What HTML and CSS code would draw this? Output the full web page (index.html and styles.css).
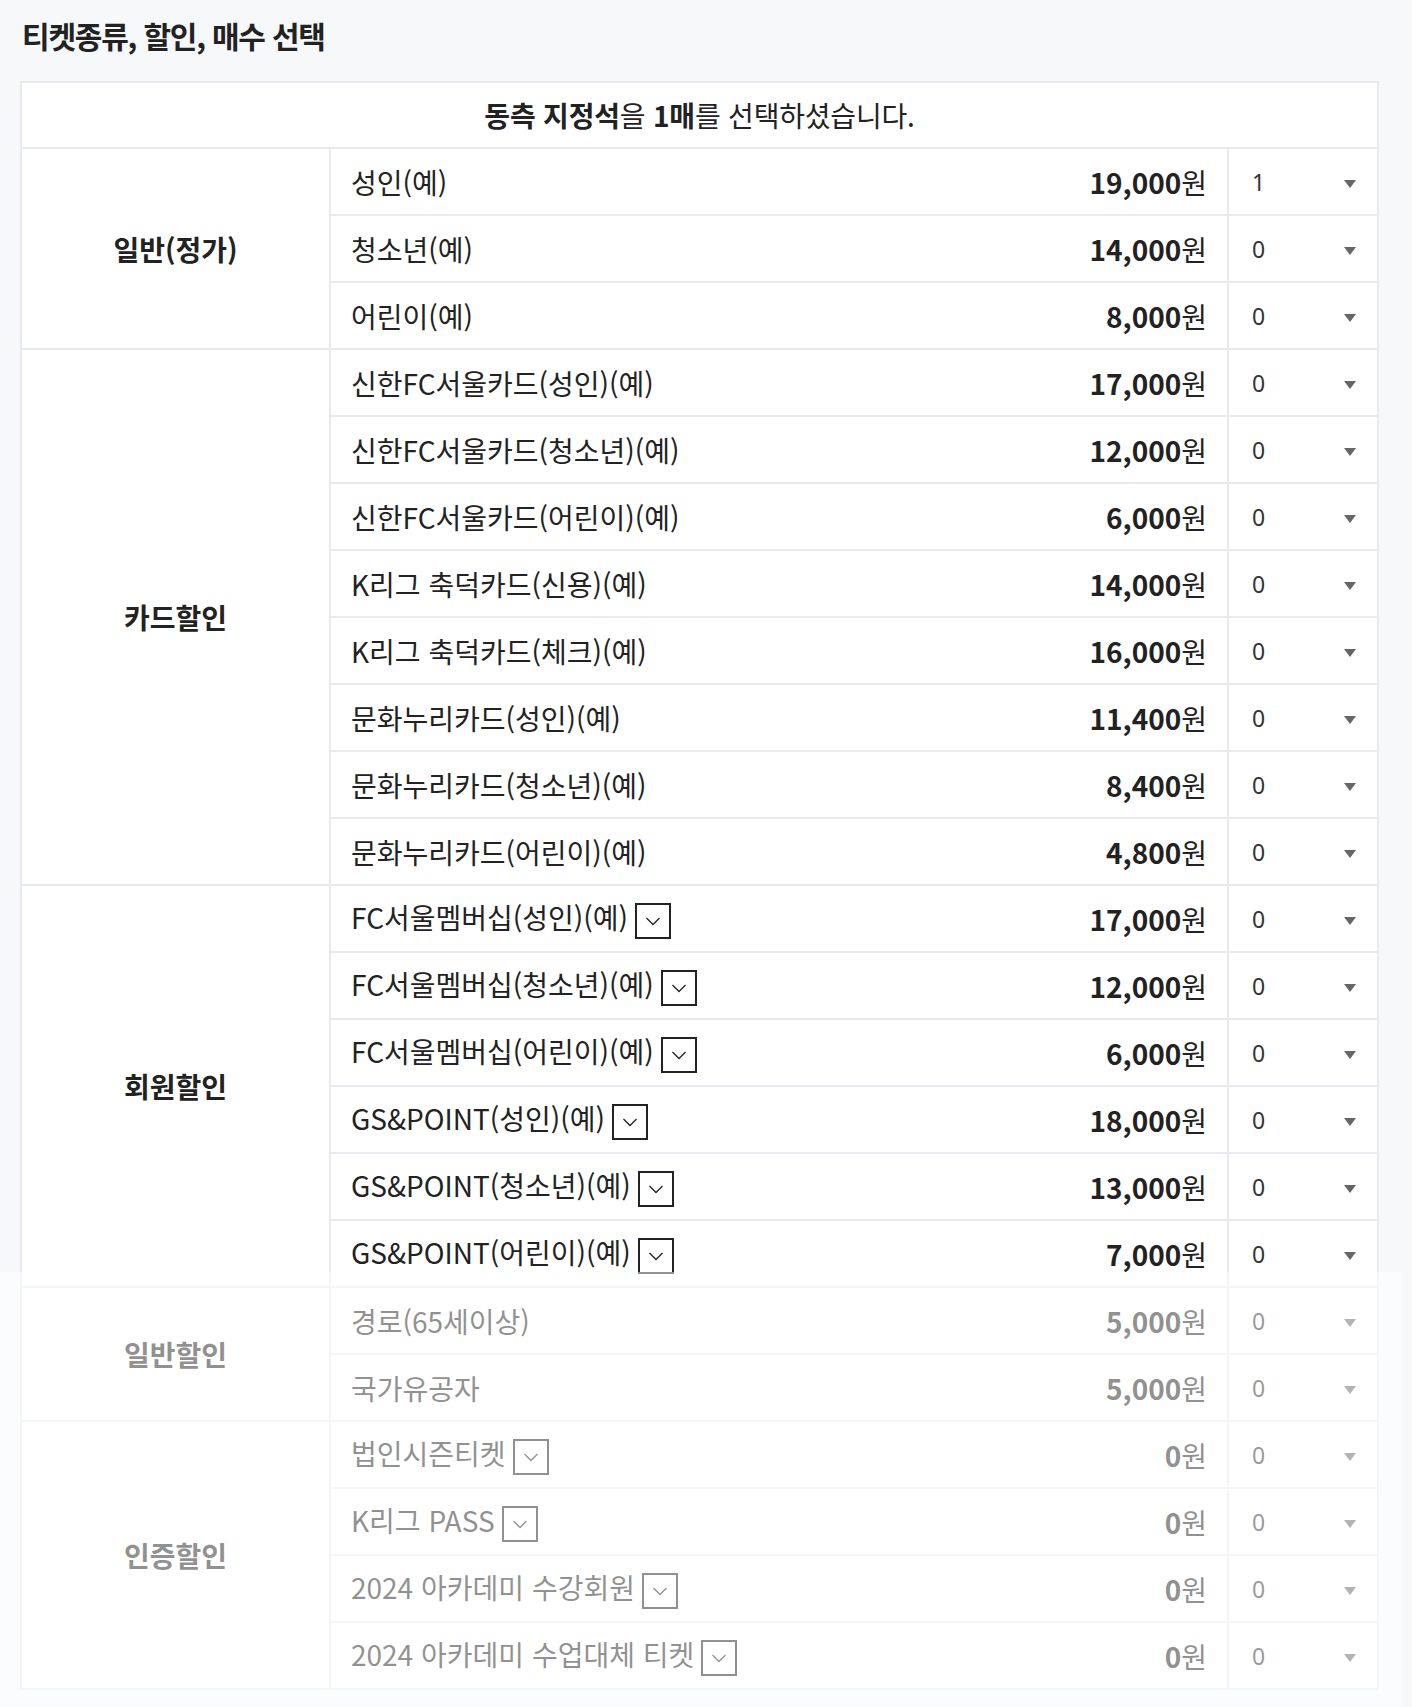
FILE: index.html
```html
<!DOCTYPE html>
<html lang="ko">
<head>
<meta charset="utf-8">
<title>티켓종류, 할인, 매수 선택</title>
<link rel="stylesheet" href="styles.css">
</head>
<body>
<div class="page">
  <h2 class="title">티켓종류, 할인, 매수 선택</h2>
  <table class="tkt">
    <colgroup><col class="c-grp"><col class="c-name"><col class="c-price"><col class="c-qty"></colgroup>
    <thead>
      <tr><th colspan="4" class="head"><b>동측 지정석</b>을 <b>1매</b>를 선택하셨습니다.</th></tr>
    </thead>
    <tbody>
      <tr><th rowspan="3" class="grp">일반(정가)</th><td class="name">성인(예)</td><td class="price"><b>19,000</b>원</td><td class="qty"><div class="sel"><span>1</span><i class="caret"></i></div></td></tr>
      <tr><td class="name">청소년(예)</td><td class="price"><b>14,000</b>원</td><td class="qty"><div class="sel"><span>0</span><i class="caret"></i></div></td></tr>
      <tr><td class="name">어린이(예)</td><td class="price"><b>8,000</b>원</td><td class="qty"><div class="sel"><span>0</span><i class="caret"></i></div></td></tr>

      <tr><th rowspan="8" class="grp">카드할인</th><td class="name">신한FC서울카드(성인)(예)</td><td class="price"><b>17,000</b>원</td><td class="qty"><div class="sel"><span>0</span><i class="caret"></i></div></td></tr>
      <tr><td class="name">신한FC서울카드(청소년)(예)</td><td class="price"><b>12,000</b>원</td><td class="qty"><div class="sel"><span>0</span><i class="caret"></i></div></td></tr>
      <tr><td class="name">신한FC서울카드(어린이)(예)</td><td class="price"><b>6,000</b>원</td><td class="qty"><div class="sel"><span>0</span><i class="caret"></i></div></td></tr>
      <tr><td class="name">K리그 축덕카드(신용)(예)</td><td class="price"><b>14,000</b>원</td><td class="qty"><div class="sel"><span>0</span><i class="caret"></i></div></td></tr>
      <tr><td class="name">K리그 축덕카드(체크)(예)</td><td class="price"><b>16,000</b>원</td><td class="qty"><div class="sel"><span>0</span><i class="caret"></i></div></td></tr>
      <tr><td class="name">문화누리카드(성인)(예)</td><td class="price"><b>11,400</b>원</td><td class="qty"><div class="sel"><span>0</span><i class="caret"></i></div></td></tr>
      <tr><td class="name">문화누리카드(청소년)(예)</td><td class="price"><b>8,400</b>원</td><td class="qty"><div class="sel"><span>0</span><i class="caret"></i></div></td></tr>
      <tr><td class="name">문화누리카드(어린이)(예)</td><td class="price"><b>4,800</b>원</td><td class="qty"><div class="sel"><span>0</span><i class="caret"></i></div></td></tr>

      <tr><th rowspan="6" class="grp">회원할인</th><td class="name">FC서울멤버십(성인)(예)<span class="more"><svg viewBox="0 0 32 32" width="32" height="32"><path d="M9.5 13 L16 19.5 L22.5 13" fill="none" stroke="currentColor" stroke-width="1.3"/></svg></span></td><td class="price"><b>17,000</b>원</td><td class="qty"><div class="sel"><span>0</span><i class="caret"></i></div></td></tr>
      <tr><td class="name">FC서울멤버십(청소년)(예)<span class="more"><svg viewBox="0 0 32 32" width="32" height="32"><path d="M9.5 13 L16 19.5 L22.5 13" fill="none" stroke="currentColor" stroke-width="1.3"/></svg></span></td><td class="price"><b>12,000</b>원</td><td class="qty"><div class="sel"><span>0</span><i class="caret"></i></div></td></tr>
      <tr><td class="name">FC서울멤버십(어린이)(예)<span class="more"><svg viewBox="0 0 32 32" width="32" height="32"><path d="M9.5 13 L16 19.5 L22.5 13" fill="none" stroke="currentColor" stroke-width="1.3"/></svg></span></td><td class="price"><b>6,000</b>원</td><td class="qty"><div class="sel"><span>0</span><i class="caret"></i></div></td></tr>
      <tr><td class="name">GS&amp;POINT(성인)(예)<span class="more"><svg viewBox="0 0 32 32" width="32" height="32"><path d="M9.5 13 L16 19.5 L22.5 13" fill="none" stroke="currentColor" stroke-width="1.3"/></svg></span></td><td class="price"><b>18,000</b>원</td><td class="qty"><div class="sel"><span>0</span><i class="caret"></i></div></td></tr>
      <tr><td class="name">GS&amp;POINT(청소년)(예)<span class="more"><svg viewBox="0 0 32 32" width="32" height="32"><path d="M9.5 13 L16 19.5 L22.5 13" fill="none" stroke="currentColor" stroke-width="1.3"/></svg></span></td><td class="price"><b>13,000</b>원</td><td class="qty"><div class="sel"><span>0</span><i class="caret"></i></div></td></tr>
      <tr><td class="name">GS&amp;POINT(어린이)(예)<span class="more"><svg viewBox="0 0 32 32" width="32" height="32"><path d="M9.5 13 L16 19.5 L22.5 13" fill="none" stroke="currentColor" stroke-width="1.3"/></svg></span></td><td class="price"><b>7,000</b>원</td><td class="qty"><div class="sel"><span>0</span><i class="caret"></i></div></td></tr>

      <tr><th rowspan="2" class="grp">일반할인</th><td class="name">경로(65세이상)</td><td class="price"><b>5,000</b>원</td><td class="qty"><div class="sel"><span>0</span><i class="caret"></i></div></td></tr>
      <tr><td class="name">국가유공자</td><td class="price"><b>5,000</b>원</td><td class="qty"><div class="sel"><span>0</span><i class="caret"></i></div></td></tr>

      <tr><th rowspan="4" class="grp">인증할인</th><td class="name">법인시즌티켓<span class="more"><svg viewBox="0 0 32 32" width="32" height="32"><path d="M9.5 13 L16 19.5 L22.5 13" fill="none" stroke="currentColor" stroke-width="1.3"/></svg></span></td><td class="price"><b>0</b>원</td><td class="qty"><div class="sel"><span>0</span><i class="caret"></i></div></td></tr>
      <tr><td class="name">K리그 PASS<span class="more"><svg viewBox="0 0 32 32" width="32" height="32"><path d="M9.5 13 L16 19.5 L22.5 13" fill="none" stroke="currentColor" stroke-width="1.3"/></svg></span></td><td class="price"><b>0</b>원</td><td class="qty"><div class="sel"><span>0</span><i class="caret"></i></div></td></tr>
      <tr><td class="name">2024 아카데미 수강회원<span class="more"><svg viewBox="0 0 32 32" width="32" height="32"><path d="M9.5 13 L16 19.5 L22.5 13" fill="none" stroke="currentColor" stroke-width="1.3"/></svg></span></td><td class="price"><b>0</b>원</td><td class="qty"><div class="sel"><span>0</span><i class="caret"></i></div></td></tr>
      <tr><td class="name">2024 아카데미 수업대체 티켓<span class="more"><svg viewBox="0 0 32 32" width="32" height="32"><path d="M9.5 13 L16 19.5 L22.5 13" fill="none" stroke="currentColor" stroke-width="1.3"/></svg></span></td><td class="price"><b>0</b>원</td><td class="qty"><div class="sel"><span>0</span><i class="caret"></i></div></td></tr>
    </tbody>
  </table>
  <div class="dim"></div>
</div>
</body>
</html>
```

FILE: styles.css
```css
html, body {
  margin: 0;
  background: #f7f8fa;
}
body {
  font-family: "Noto Sans CJK KR", "Noto Sans", sans-serif;
  color: #222;
}
.page {
  position: relative;
  box-sizing: border-box;
  min-height: 1707px;
  padding: 15px 0 17px 20px;
}
.title {
  margin: 0;
  padding-left: 2px;
  font-size: 30px;
  font-weight: 700;
  line-height: 40px;
  letter-spacing: -1.2px;
  color: #222;
}
.tkt {
  margin-top: 26px;
  width: 1359px;
  border-collapse: collapse;
  table-layout: fixed;
  background: #fff;
  font-size: 28px;
}
.c-grp { width: 309px; }
.c-price { width: 260px; }
.c-qty { width: 150px; }
.tkt th, .tkt td {
  border: 2px solid #e9eaf0;
  padding: 0 22px;
}
.head {
  height: 64px;
  font-weight: 400;
  text-align: center;
  color: #222;
  letter-spacing: -0.2px;
}
.head b { font-weight: 700; }
.tkt tbody td { height: 65px; }
.grp {
  font-weight: 700;
  text-align: center;
  color: #222;
}
.tkt td.name {
  text-align: left;
  white-space: nowrap;
  color: #222;
  padding-left: 20px;
  border-right-width: 0;
}
.tkt td.price {
  text-align: right;
  color: #222;
  border-left-width: 0;
  padding-right: 20px;
}
.price b { font-weight: 700; }
.tkt td.qty {
  padding: 0 21px 0 23px;
}
.sel {
  display: flex;
  align-items: center;
  justify-content: space-between;
  font-family: "Noto Sans", sans-serif;
  font-size: 23px;
  color: #333;
}
.caret {
  width: 0;
  height: 0;
  margin-top: 4px;
  border-left: 6px solid transparent;
  border-right: 6px solid transparent;
  border-top: 8px solid #666;
}
.more {
  display: inline-block;
  box-sizing: border-box;
  width: 36px;
  height: 36px;
  margin-left: 7px;
  border: 2px solid #222;
  vertical-align: middle;
  color: #222;
  position: relative;
  top: -1px;
}
.more svg {
  display: block;
  width: 32px;
  height: 32px;
}
.dim {
  position: absolute;
  left: 0;
  top: 1272px;
  width: 1402px;
  bottom: 0;
  background: rgba(255, 255, 255, 0.5);
}
```
